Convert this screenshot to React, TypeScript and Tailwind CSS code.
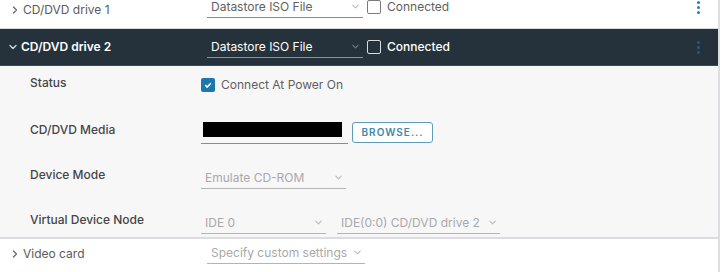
import React from 'react';

const font = { fontFamily: 'Inter, "Liberation Sans", sans-serif' };

function Caret({ dir = 'down', className = '' }: { dir?: 'down' | 'right'; className?: string }) {
  return (
    <svg
      viewBox="0 0 10 10"
      className={className}
      fill="none"
      stroke="currentColor"
      strokeWidth={1.3}
      strokeLinecap="round"
      strokeLinejoin="round"
    >
      {dir === 'down' ? <path d="M2 3.5 L5 6.5 L8 3.5" /> : <path d="M3.5 2 L6.5 5 L3.5 8" />}
    </svg>
  );
}

function Select({
  text,
  width,
  disabled = false,
  dark = false,
}: {
  text: string;
  width: string;
  disabled?: boolean;
  dark?: boolean;
}) {
  return (
    <div
      className={`flex h-[22px] items-center justify-between border-b pl-[4px] pr-[3px] ${width} ${
        dark ? 'border-[#8a949b] text-white' : disabled ? 'border-[#b4b4b4] text-[#a9a9a9]' : 'border-[#8c8c8c] text-[#616161]'
      }`}
    >
      <span className="text-[12px] leading-none whitespace-nowrap">{text}</span>
      <Caret className={`h-[9px] w-[9px] ${dark ? 'text-[#6f7a82]' : 'text-[#bdbdbd]'}`} />
    </div>
  );
}

function Checkbox({ dark = false }: { dark?: boolean }) {
  return (
    <div
      className={`h-[14px] w-[14px] rounded-[2px] border ${
        dark ? 'border-[#d9dde0] bg-transparent' : 'border-[#7a7a7a] bg-white'
      }`}
    />
  );
}

function Kebab({ dark = false }: { dark?: boolean }) {
  const c = dark ? 'bg-[#1d5f7c]' : 'bg-[#1b84b2]';
  return (
    <div className="flex flex-col gap-[2px]">
      <span className={`h-[3px] w-[3px] rounded-full ${c}`} />
      <span className={`h-[3px] w-[3px] rounded-full ${c}`} />
      <span className={`h-[3px] w-[3px] rounded-full ${c}`} />
    </div>
  );
}

function DetailRow({ label, children }: { label: string; children: React.ReactNode }) {
  return (
    <div className="flex h-[24px] items-center">
      <div className="w-[201px] pl-[30px] text-[12px] font-medium text-[#454545]">{label}</div>
      <div className="flex items-center">{children}</div>
    </div>
  );
}

export default function App() {
  return (
    <div className="flex h-[272px] w-[728px] overflow-hidden bg-white" style={font}>
      <div className="flex w-[718px] flex-col">
        {/* CD/DVD drive 1 */}
        <div className="flex h-[29px] items-start border-b border-[#d9d9d9]">
          <div className="flex w-[207px] items-center pl-[10px] pt-[1px] text-[12px] text-[#5a5a5a]">
            <Caret dir="right" className="mr-[3px] h-[10px] w-[10px] text-[#6a6a6a]" />
            CD/DVD drive 1
          </div>
          <div className="-mt-[4px] flex flex-1 items-center">
            <Select text="Datastore ISO File" width="w-[156px]" />
            <div className="ml-[4px] flex items-center gap-[6px]">
              <Checkbox />
              <span className="text-[12px] text-[#5f5f5f]">Connected</span>
            </div>
            <div className="ml-auto mr-[18px]">
              <Kebab />
            </div>
          </div>
        </div>

        {/* CD/DVD drive 2 (expanded) */}
        <div className="flex h-[37px] items-center border-b border-[#3d4a54] bg-[#25323c]">
          <div className="flex w-[207px] items-center pl-[8px] text-[12px] font-semibold text-white">
            <Caret className="mr-[3px] h-[10px] w-[10px] text-[#d6dade]" />
            CD/DVD drive 2
          </div>
          <div className="flex flex-1 items-center">
            <Select text="Datastore ISO File" width="w-[156px]" dark />
            <div className="ml-[4px] flex items-center gap-[6px]">
              <Checkbox dark />
              <span className="text-[12px] font-medium text-white">Connected</span>
            </div>
            <div className="ml-auto mr-[18px]">
              <Kebab dark />
            </div>
          </div>
        </div>

        <div className="flex flex-col border-b-2 border-[#dcdce0] bg-[#f7f7f8] pt-[5px] pb-[5px]">
          <DetailRow label="Status">
            <div className="flex items-center gap-[6px] pt-[3px]">
              <div className="flex h-[14px] w-[14px] items-center justify-center rounded-[2px] bg-[#1b77ad]">
                <svg viewBox="0 0 10 10" className="h-[10px] w-[10px]" fill="none" stroke="white" strokeWidth={1.6}>
                  <path d="M2.3 5.2 L4.2 7 L7.8 3.2" />
                </svg>
              </div>
              <span className="text-[12px] text-[#5f5f5f]">Connect At Power On</span>
            </div>
          </DetailRow>
          <div className="h-[23px]" />
          <DetailRow label="CD/DVD Media">
            <div className="mt-[6px] flex h-[22px] w-[147px] items-start border-b border-[#8c8c8c] pl-[2px]">
              <div className="h-[15px] w-[139px] bg-black" />
            </div>
            <button className="ml-[4px] mt-[4px] h-[21px] w-[81px] rounded-[3px] border border-[#5e9db5] bg-white text-[10px] font-semibold tracking-[1px] text-[#3c89a8]">
              BROWSE...
            </button>
          </DetailRow>
          <div className="h-[21px]" />
          <DetailRow label="Device Mode">
            <div className="mt-[6px]">
              <Select text="Emulate CD-ROM" width="w-[145px]" disabled />
            </div>
          </DetailRow>
          <div className="h-[21px]" />
          <DetailRow label="Virtual Device Node">
            <div className="mt-[6px] flex gap-[11px]">
              <Select text="IDE 0" width="w-[125px]" disabled />
              <Select text="IDE(0:0) CD/DVD drive 2" width="w-[163px]" disabled />
            </div>
          </DetailRow>
        </div>

        {/* Video card */}
        <div className="flex flex-1 items-start pt-[5px]">
          <div className="flex w-[207px] items-center pl-[10px] pt-[1px] text-[12px] text-[#5a5a5a]">
            <Caret dir="right" className="mr-[3px] h-[10px] w-[10px] text-[#6a6a6a]" />
            Video card
          </div>
          <div className="-mt-[2px]">
            <Select text="Specify custom settings" width="w-[158px]" disabled />
          </div>
        </div>
      </div>
      <div className="w-[2px] bg-[#dedee2]" />
      <div className="flex-1 bg-white" />
    </div>
  );
}
